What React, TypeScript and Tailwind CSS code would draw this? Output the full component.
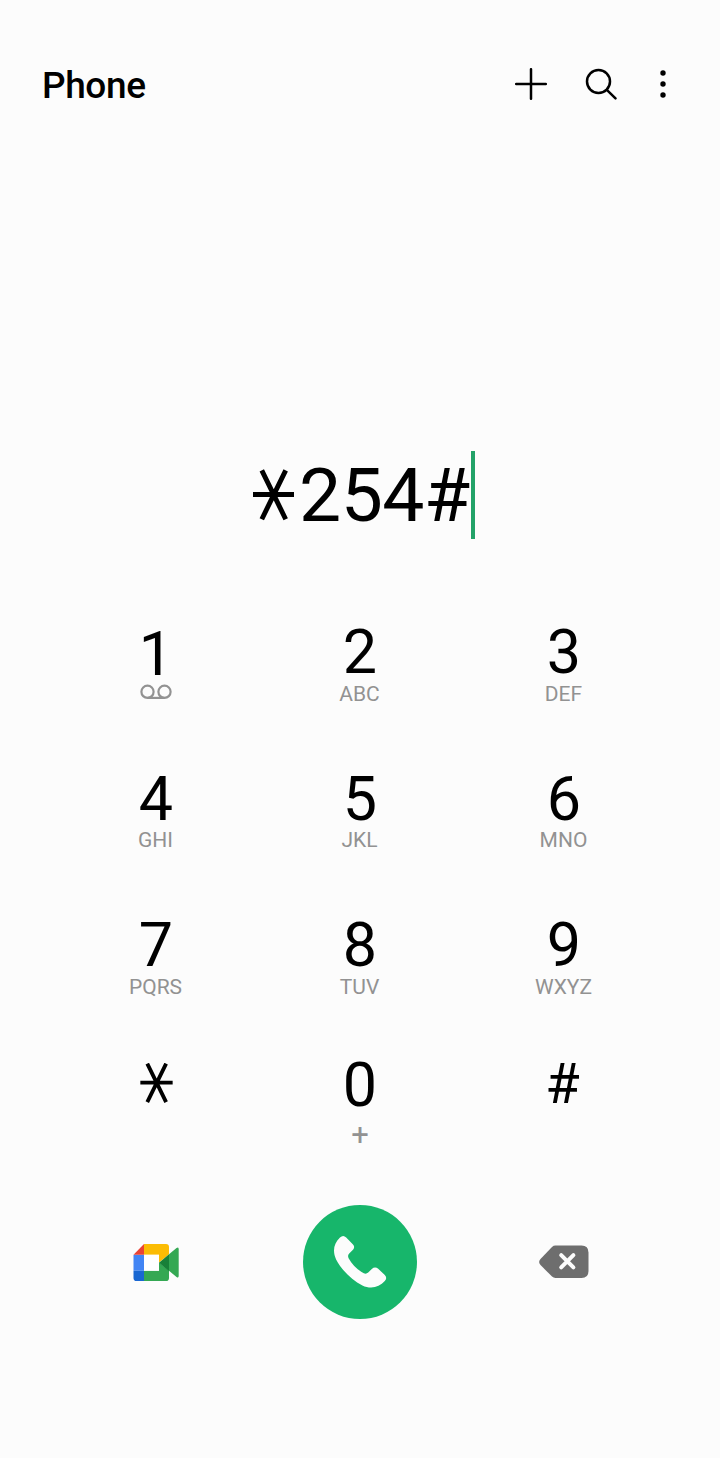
import React from 'react';

interface KeyProps {
  digit: string;
  letters?: React.ReactNode;
  className?: string;
}

const Key: React.FC<KeyProps> = ({ digit, letters, className = '' }) => (
  <button className="flex flex-col items-center gap-[0.5px]">
    <span className={`text-[61px] leading-[61px] ${className}`}>{digit}</span>
    <span className="pr-px text-[21px] leading-[21px] text-[#929292]">{letters}</span>
  </button>
);

const Star: React.FC<{ className?: string; thickness: number }> = ({ className, thickness }) => (
  <svg className={className} viewBox="0 0 42 52" fill="none" stroke="currentColor" strokeWidth={thickness}>
    <path d="M0 25.5H42M9 .8L33.5 50.8M33.5 .8L9 50.8" />
  </svg>
);

const Voicemail = () => (
  <svg className="h-4 w-8" viewBox="0 0 32 16" fill="none" stroke="#929292" strokeWidth="2.2">
    <circle cx="7.5" cy="7.8" r="6.1" />
    <circle cx="24.5" cy="7.8" r="6.1" />
    <path d="M7.5 13.9H24.5" />
  </svg>
);

const MeetLogo = () => (
  <svg className="h-[37px] w-[46px]" viewBox="0 0 46 36" preserveAspectRatio="none">
    <path d="M.5 10.5H11V26H.5Z" fill="#4285f4" />
    <path d="M.5 10.5L11 0V10.5Z" fill="#ea4335" />
    <path d="M11 0H33Q36 0 36 3V10L26 18V10.5H11Z" fill="#fbbc04" />
    <path d="M.5 26H11V36H3.5Q.5 36 .5 33Z" fill="#1967d2" />
    <path d="M11 26H26V18L36 26V33Q36 36 33 36H11Z" fill="#34a853" />
    <path d="M11 10.5H26V26H11Z" fill="#fff" />
    <path d="M36 10L43.5 4Q45.7 2.5 45.7 5V31Q45.7 33.5 43.5 32L36 26Z" fill="#34a853" />
    <path d="M36 10L26 18.2L36 26.5Z" fill="#188038" />
  </svg>
);

const Handset = () => (
  <svg className="h-[54px] w-[54px]" viewBox="0 0 54 54" fill="#fcfcfc">
    <path d="M7 2.6Q10.2-.4 13.2 2.6L20 9.6Q22.2 12 20.2 14.4L16.2 18.4Q14.3 20.4 15.6 23.2C19 29.5 24.5 35 30.8 38.2Q33.2 39.4 35.2 37.5L38.8 34Q42 31.2 45.2 33.8L51.8 40Q54.6 42.8 51.8 46C46 52.8 37.3 54.2 29.4 50.4C18.6 45 8.6 35 3.1 24.4C-.5 16.7.4 8.7 7 2.6Z" />
  </svg>
);

const Backspace = () => (
  <svg className="h-[34px] w-[50px]" viewBox="0 0 50 34" fill="none">
    <path d="M16.5.5H42.5Q49.5.5 49.5 7.5V26Q49.5 33 42.5 33H16.5Q14.5 33 13 31.6L1.5 20Q-1.2 17 1.5 14L13 1.9Q14.5.5 16.5.5Z" fill="#6e6e6e" />
    <path d="M22.2 10.2L34.4 22.4M34.4 10.2L22.2 22.4" stroke="#fcfcfc" strokeWidth="4" strokeLinecap="round" />
  </svg>
);

export default function App() {
  return (
    <div className="flex h-[1458px] w-[720px] flex-col bg-[#fcfcfc] font-[Roboto,sans-serif] text-black">
      <header className="flex h-[168px] items-center justify-between pr-[53px] pl-[42px]">
        <h1 className="pt-1 text-[37px] leading-[44px] font-medium tracking-[-0.4px]">Phone</h1>
        <div className="flex items-center">
          <svg className="mr-[38px] h-8 w-8" viewBox="0 0 32 32" fill="none" stroke="black" strokeWidth="2.5" strokeLinecap="round">
            <path d="M16 1.2V30.8M1.2 16H30.8" />
          </svg>
          <svg className="mr-[42px] h-8 w-8" viewBox="0 0 32 32" fill="none" stroke="black" strokeWidth="2.5" strokeLinecap="round">
            <circle cx="13.5" cy="13.5" r="11.5" />
            <path d="M21.8 21.8L30.5 30.3" />
          </svg>
          <svg className="h-8 w-2" viewBox="0 0 8 32">
            <circle cx="4" cy="5" r="2.7" />
            <circle cx="4" cy="16" r="2.7" />
            <circle cx="4" cy="27" r="2.7" />
          </svg>
        </div>
      </header>

      {/* Dialled number with the caret */}
      <div className="mt-[283px] flex h-[88px] items-center pl-[253px]">
        <Star className="mr-[5px] h-[52px] w-[41px]" thickness={5} />
        <span className="text-[75px] leading-[88px] tracking-[-0.5px]">254#</span>
        <span className="ml-px h-[88px] w-1 bg-[#23a268]" />
      </div>

      <div className="mt-[83px] grid grid-cols-3 gap-y-16 px-[54px]">
        <Key digit="1" letters={<Voicemail />} className="relative top-0.5" />
        <Key digit="2" letters="ABC" />
        <Key digit="3" letters="DEF" />
        <Key digit="4" letters="GHI" />
        <Key digit="5" letters="JKL" />
        <Key digit="6" letters="MNO" />
        <Key digit="7" letters="PQRS" />
        <Key digit="8" letters="TUV" />
        <Key digit="9" letters="WXYZ" />
      </div>

      <div className="mt-[57.5px] grid h-[92px] grid-cols-3 px-[54px]">
        <button className="flex justify-center pt-2">
          <Star className="h-10 w-[33px]" thickness={5} />
        </button>
        <button className="flex flex-col items-center">
          <span className="text-[61px] leading-[61px]">0</span>
          <span className="pt-[3px] text-[31px] leading-[31px] text-[#929292]">+</span>
        </button>
        <button className="flex justify-center pr-[3px] text-[56px] leading-[58px]">#</button>
      </div>

      <div className="mt-[58px] grid h-[114px] grid-cols-3 items-center px-[54px]">
        <button className="flex justify-center">
          <MeetLogo />
        </button>
        <button className="flex h-[114px] w-[114px] items-center justify-center justify-self-center rounded-full bg-[#17b66b]">
          <Handset />
        </button>
        <button className="flex justify-center">
          <Backspace />
        </button>
      </div>
    </div>
  );
}
